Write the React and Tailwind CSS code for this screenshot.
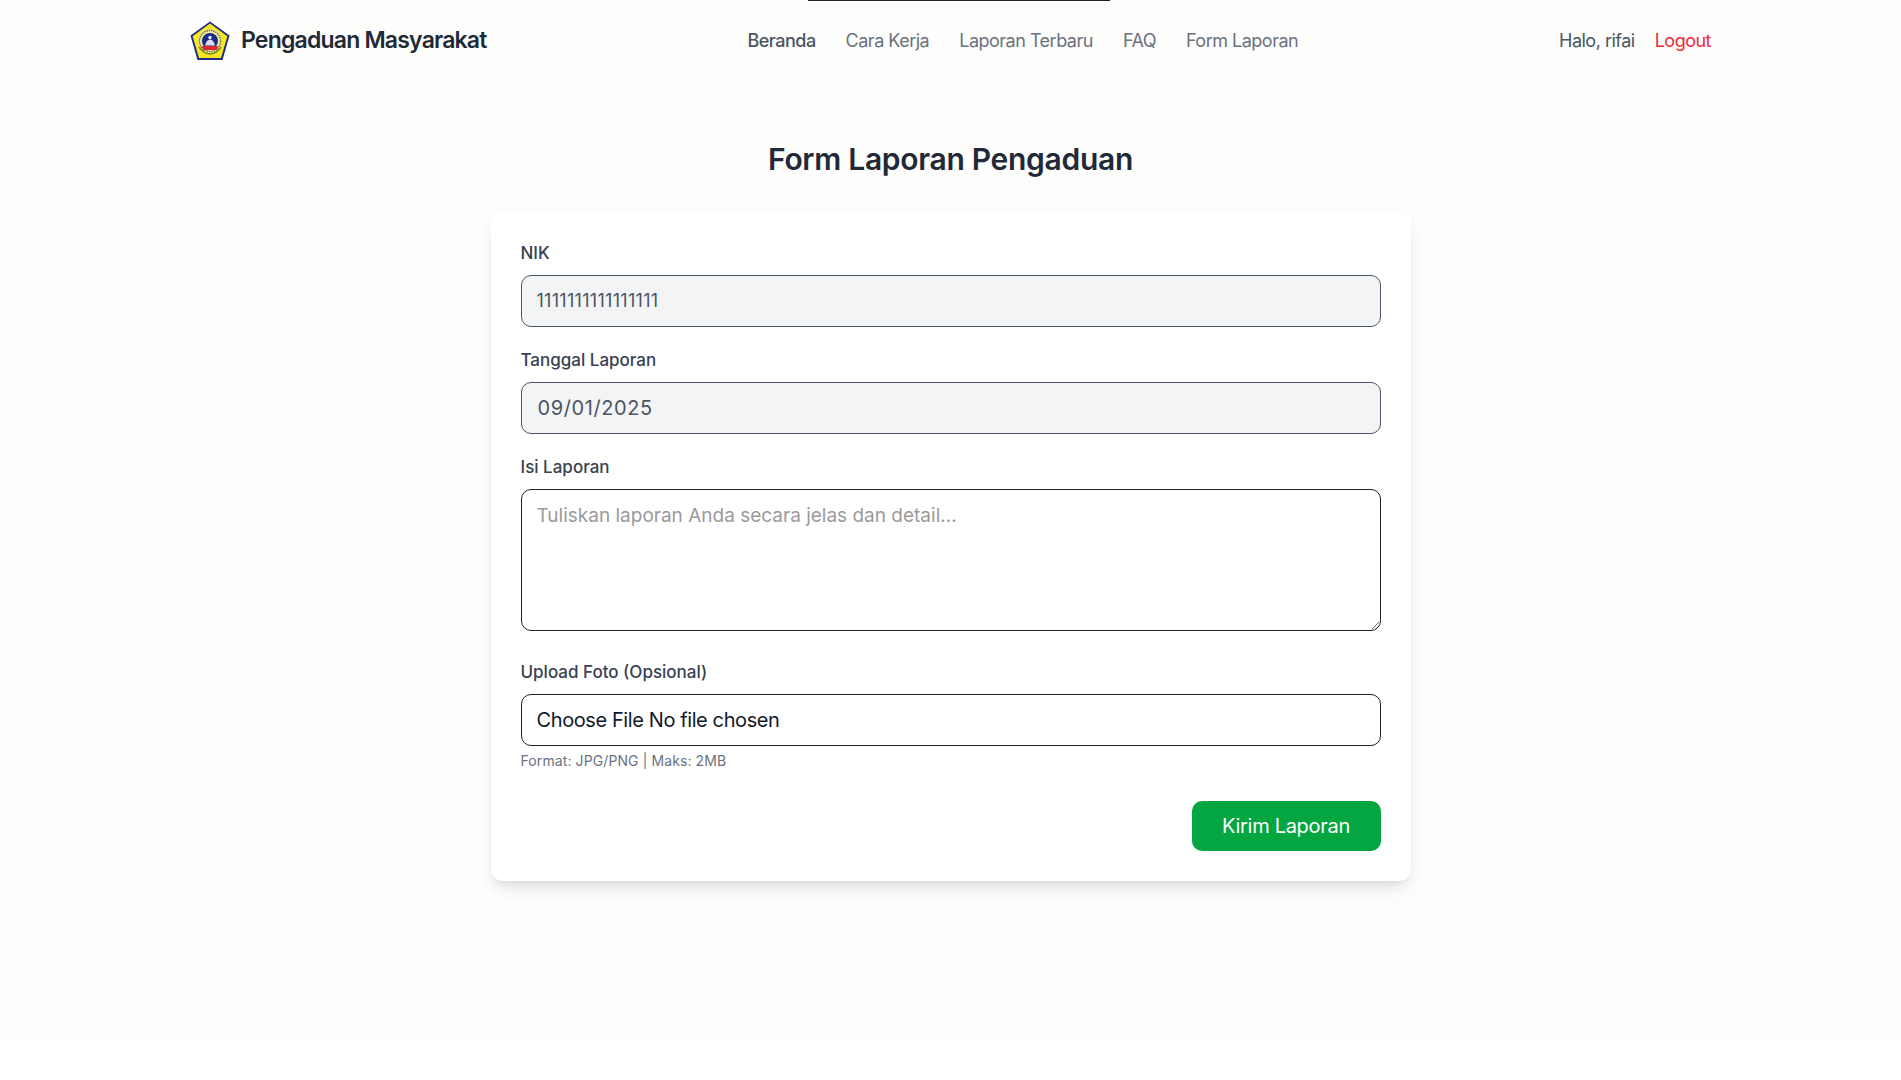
import React from 'react';

const font = "font-['Inter','Noto_Sans',sans-serif]";

const Logo = () => (
  <svg viewBox="0 0 40 40" className="w-10 h-10 shrink-0">
    <polygon points="20,0.5 39.5,14.5 32.5,39 7.5,39 0.5,14.5" fill="#1c2a8a" />
    <polygon points="20,2.5 37.4,15.2 31,37 9,37 2.6,15.2" fill="#f8e71c" />
    <circle cx="20" cy="20" r="12" fill="#f4eea0" />
    <circle cx="20" cy="20" r="10.6" fill="none" stroke="#6d6a3c" strokeWidth="1.6" strokeDasharray="1.4 0.9" />
    <circle cx="20" cy="20" r="8" fill="#1a2c86" />
    <circle cx="20" cy="16.5" r="1.7" fill="#f0f0f5" />
    <path d="M15 24.5 Q16.5 18.5 20 18.5 Q23.5 18.5 25 24.5 Z" fill="#dcdce8" />
    <path d="M12 25 H28 L27 29 H13 Z" fill="#dc2a2e" />
    <path d="M9 26 Q14 33 20 33 Q26 33 31 26" fill="none" stroke="#7c8a2e" strokeWidth="1.6" />
  </svg>
);

const Label = ({ children }) => (
  <label className="block text-[17px] leading-6 font-medium text-[#374151] mb-[10px]">{children}</label>
);

const App = () => {
  const links = ['Beranda', 'Cara Kerja', 'Laporan Terbaru', 'FAQ', 'Form Laporan'];

  return (
    <div className={`${font} min-h-[1080px] bg-white`}>
      <div className="h-[1041px] bg-[#fdfdfb] flex flex-col items-center relative">
        <div className="absolute top-0 left-[808px] w-[302px] h-px bg-[#222222]" />

        <nav className="w-[1521px] h-[81px] flex items-center justify-between">
          <div className="flex items-center gap-[11px]">
            <Logo />
            <span className="text-[23px] font-semibold text-[#1f2937] tracking-[-0.8px] whitespace-nowrap">Pengaduan Masyarakat</span>
          </div>
          <div className="flex items-center gap-[30px] text-lg text-[#6b7280] tracking-[-0.5px]">
            {links.map((l, i) => (
              <a key={l} className={i === 0 ? 'text-[#4b5563] font-medium' : ''}>{l}</a>
            ))}
          </div>
          <div className="flex items-center justify-end gap-5 text-lg tracking-[-0.5px]">
            <span className="text-[#4b5563]">Halo, rifai</span>
            <a className="text-[#ef2b3b]">Logout</a>
          </div>
        </nav>

        <h1 className="mt-[60px] text-[30px] leading-9 font-semibold text-[#1f2937] tracking-[-0.3px]">Form Laporan Pengaduan</h1>

        <form className="mt-[34px] w-[920px] h-[670px] bg-white rounded-xl shadow-lg p-[30px]">
          <Label>NIK</Label>
          <div className="h-[52px] bg-[#f3f4f6] border border-[#4b5563] rounded-[10px] px-[15px] flex items-center text-lg text-[#4b5563] tracking-[0.3px] mb-[21px]">
            1111111111111111
          </div>

          <Label>Tanggal Laporan</Label>
          <div className="h-[52px] bg-[#f3f4f6] border border-[#4b5563] rounded-[10px] px-4 flex items-center text-xl text-[#4b5563] tracking-[0.6px] mb-[21px]">
            09/01/2025
          </div>

          <Label>Isi Laporan</Label>
          <textarea
            readOnly
            placeholder="Tuliskan laporan Anda secara jelas dan detail..."
            className="block w-full h-[142px] bg-white border border-[#222222] rounded-[10px] px-[15px] py-[12px] text-[19px] placeholder:text-[#9a9a9a] mb-[29px]"
          />

          <Label>Upload Foto (Opsional)</Label>
          <div className="h-[52px] bg-white border border-[#222222] rounded-[10px] px-[15px] flex items-center text-xl text-[#111827] tracking-[-0.4px]">
            Choose File No file chosen
          </div>
          <p className="mt-[5px] text-sm leading-5 text-[#6b7280] tracking-[0.1px]">Format: JPG/PNG | Maks: 2MB</p>

          <div className="mt-[30px] flex justify-end">
            <button type="button" className="w-[189px] h-[50px] bg-[#03a640] rounded-[10px] text-white text-xl tracking-[-0.3px]">
              Kirim Laporan
            </button>
          </div>
        </form>
      </div>
    </div>
  );
};

export default App;
